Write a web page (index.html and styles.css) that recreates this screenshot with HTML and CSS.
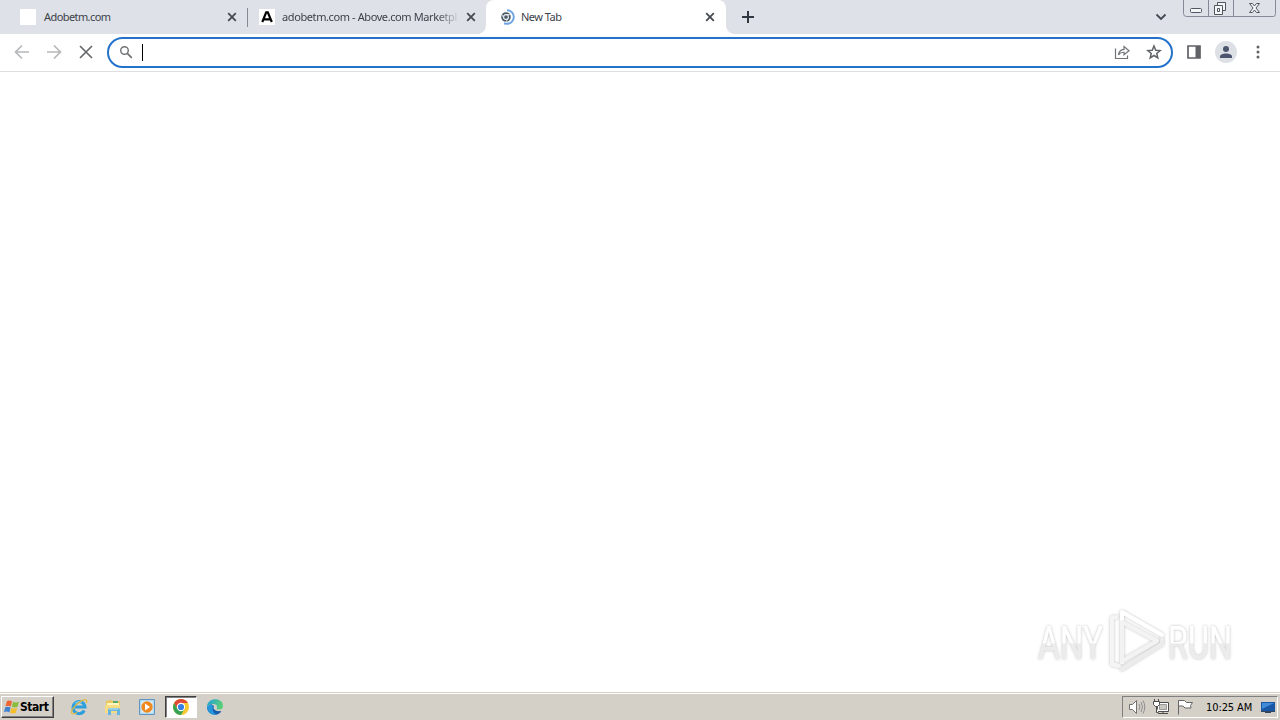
FILE: index.html
```html
<!DOCTYPE html>
<html lang="en">
<head>
<meta charset="utf-8">
<title>New Tab</title>
<link rel="stylesheet" href="styles.css">
</head>
<body>
<div class="desktop">
  <header class="tabstrip">
    <div class="tab first">
      <span class="favicon blank"></span>
      <span class="title t1">Adobetm.com</span>
      <svg class="close" viewBox="0 0 10 10"><path d="M1.2 1.2l7.6 7.6M8.800 1.200l-7.600 7.600"/></svg>
    </div>
    <div class="tab second">
      <span class="favicon"><svg width="16" height="16" viewBox="0 0 16 16"><path d="M3.300 13L7.200 3.300h1.600L12.800 13M5.300 10.300h6" fill="none" stroke="#000" stroke-width="2.200"/></svg></span>
      <span class="title fade t2">adobetm.com - Above.com Marketpl</span>
      <svg class="close" viewBox="0 0 10 10"><path d="M1.200 1.200l7.600 7.600M8.800 1.200l-7.600 7.600"/></svg>
    </div>
    <div class="tab active">
      <span class="spinner"><svg width="16" height="16" viewBox="0 0 16 16" fill="none"><circle cx="7" cy="8" r="4.800" fill="#4b5967"/><circle cx="7" cy="8" r="2.400" stroke="#e9eef2" stroke-width="1.100"/><path d="M7 5.600h5M4.900 9.200L2.800 5.500M9.200 9.200l-2.300 3.800" stroke="#e9eef2" stroke-width=".9"/><path d="M8 1.200A6.800 6.800 0 0 1 8 14.800L5 14.500" stroke="#6ba3e4" stroke-width="1.900"/></svg></span>
      <span class="title t3">New Tab</span>
      <svg class="close" viewBox="0 0 10 10"><path d="M1.200 1.200l7.600 7.600M8.800 1.200l-7.600 7.600"/></svg>
    </div>
    <svg class="plus" width="14" height="14" viewBox="0 0 14 14"><path d="M7 1v12M1 7h12" stroke="#303740" stroke-width="2"/></svg>
    <svg class="chevron" width="12" height="8" viewBox="0 0 12 8"><path d="M1.500 1.500L6 6l4.500-4.500" fill="none" stroke="#414950" stroke-width="1.800"/></svg>
    <svg class="winbuttons" width="94" height="18" viewBox="0 0 94 18" fill="none"><path d="M.5 0v13.500q0 3 3 3h87q2 0 2-3V0M25.500 0v16M50.500 0v16" stroke="#858b96"/><rect x="7.500" y="8.500" width="11" height="4" rx="1" fill="#f4f5f7" stroke="#515761"/><g fill="#f4f5f7" stroke="#515761"><path d="M34.500 2.500h8v8h-8z"/><path d="M31.500 5.500h8v9h-8z"/><path d="M34.500 8.500h2v3h-2z"/></g><path d="M66.500 3.500h3l2 2.500 2-2.500h3l-3.500 4.500 3.500 4.500h-3l-2-2.500-2 2.500h-3L70 8z" fill="#f4f5f7" stroke="#515761"/></svg>
  </header>

  <nav class="toolbar">
    <svg width="16" height="16" viewBox="0 0 16 16"><path d="M15 8H2M8 1.500L1.500 8 8 14.500" stroke="#b7b8ba"/></svg>
    <svg width="16" height="16" viewBox="0 0 16 16"><path d="M1 8h13M8 1.500L14.500 8 8 14.500" stroke="#b7b8ba"/></svg>
    <svg width="16" height="16" viewBox="0 0 16 16"><path d="M2 2l12 12M14 2L2 14" stroke="#66696d"/></svg>
    <div class="omnibox">
      <svg width="14" height="14" viewBox="0 0 14 14"><circle cx="5.500" cy="5.500" r="3.800" stroke="#707276" stroke-width="1.400"/><path d="M8.300 8.300l4.500 4.500" stroke="#707276"/></svg>
      <span class="caret"></span>
      <svg class="share" width="16" height="16" viewBox="0 0 16 16"><path d="M1.500 4.500v10h12v-3" stroke="#707276" stroke-width="1.200"/><path d="M4.500 11Q5 5.500 10 5.300V2.500l5 4.300-5 4V8.300Q6.500 8 4.500 11z" stroke="#707276" stroke-width="1.200"/></svg>
      <svg class="star" width="16" height="16" viewBox="0 0 16 16"><path d="M8 2l1.750 4.250 4.450.35-3.450 2.900 1.050 4.400L8 11.500l-3.800 2.400 1.050-4.400L1.800 6.600l4.450-.35z" stroke="#606368" stroke-width="1.500"/></svg>
    </div>
    <svg class="panel" width="14" height="14" viewBox="0 0 14 14"><path d="M1 1h12v12H1z" stroke="#606266"/><path d="M8.500 1H13v12H8.500z" fill="#606266"/></svg>
    <svg class="profile" width="22" height="22" viewBox="0 0 22 22"><circle cx="11" cy="11" r="11" fill="#dde1e6"/><circle cx="11" cy="8" r="3" fill="#4b556e"/><path d="M5 17v-1.500c0-4 12-4 12 0V17z" fill="#4b556e"/></svg>
    <svg class="menu" width="4" height="16" viewBox="0 0 4 16"><g fill="#606266"><circle cx="2" cy="3" r="1.500"/><circle cx="2" cy="8" r="1.500"/><circle cx="2" cy="13" r="1.500"/></g></svg>
  </nav>

  <main class="page">
    <svg class="watermark" width="210" height="76" viewBox="0 0 210 76" fill="none">
      <defs>
        <linearGradient id="lt" x1="0" y1="0" x2="0" y2="76" gradientUnits="userSpaceOnUse"><stop offset=".5" stop-color="#fff"/><stop offset=".51" stop-color="#ececec"/></linearGradient>
        <filter id="sh" x="-10%" y="-20%" width="120%" height="140%"><feDropShadow dx="0" dy="0" stdDeviation="1.800" flood-color="#777" flood-opacity=".48"/></filter>
      </defs>
      <g filter="url(#sh)">
        <g class="brand" fill="url(#lt)">
          <text x="8" y="54" textLength="65" lengthAdjust="spacingAndGlyphs">ANY</text>
          <text x="138" y="54" textLength="64" lengthAdjust="spacingAndGlyphs">RUN</text>
        </g>
        <g stroke-width="4" stroke-linejoin="round" stroke-linecap="round">
          <path d="M86 12l-4 1v46l7 2" stroke="#f5f5f5"/>
          <path d="M92 57V7l40 23" stroke="#fff"/>
          <path d="M92 17l35 19-35 20z" stroke="#f3f3f3"/>
          <path d="M92 64l40-25v-5" stroke="#ececec"/>
        </g>
      </g>
    </svg>
  </main>

  <footer class="taskbar">
    <div class="start">
      <svg width="16" height="16" viewBox="0 0 16 16"><path d="M3 2q2.500-1.300 5 .3L6.800 7.400Q4.500 6 1.500 7.200z" fill="#ee6531"/><path d="M9 2.700q2.500 1.400 6 .1l-1.500 5q-3 1.200-5.800-.1z" fill="#8bbd3c"/><path d="M1.300 8.300q2.800-1.300 5.300.2L5.300 13.400Q3 12 0 13.100z" fill="#3f83cf"/><path d="M7.400 8.900q3 1.300 5.800.2l-1.500 5q-3 1-5.700-.3z" fill="#f4bd2b"/></svg><span>Start</span>
    </div>
    <div class="launch">
      <svg width="18" height="18" viewBox="0 0 18 18" fill="none"><path d="M14.300 12.500A6 6 0 1 1 15 9H5" stroke="#2d9fdd" stroke-width="3"/><path d="M5 5.500a6 6 0 0 1 7-1.300" stroke="#8bdcf8"/><path d="M2 15.500C-.5 12 11 .5 16 2q1.300.5.3 3M2 15.500q2 1 5-1" stroke="#e4b83c" stroke-width="1.300"/></svg>
    </div>
    <div class="launch">
      <svg width="18" height="18" viewBox="0 0 18 18"><path d="M2 3l5-1 1 1h8v12H2z" fill="#eac85e"/><path d="M3 5h12v3H3z" fill="#fff6bd"/><path d="M9 3h5v2H9z" fill="#57a96c"/><path d="M1 7h15v8H1z" fill="#f6dc83"/><path d="M4 17v-5q0-2 2-2h8q2 0 2 2v5h-3v-4H7v4z" fill="#67b5df"/><path d="M5 11h9" stroke="#c2e8f8"/></svg>
    </div>
    <div class="launch">
      <svg width="18" height="18" viewBox="0 0 18 18"><path d="M1.500 1.500h15v15h-15z" fill="#b7d9f0" stroke="#5d95c5"/><path d="M3.500 3.500h11v11h-11z" fill="#e4f0f8"/><circle cx="9" cy="9" r="5.700" fill="#f08a20"/><path d="M7 5.500l5 3.500-5 3.500z" fill="#fff"/></svg>
    </div>
    <div class="launch running">
      <svg width="18" height="18" viewBox="0 0 18 18"><circle cx="9" cy="9" r="8" fill="#f6c92f"/><path d="M2.100 5A8 8 0 0 1 15.900 5H9L5.500 11z" fill="#df4935"/><path d="M2.100 5A8 8 0 0 0 9 17l3.500-6H5.500z" fill="#36a354"/><circle cx="9" cy="9" r="4.200" fill="#fff"/><circle cx="9" cy="9" r="3.100" fill="#377de2"/></svg>
    </div>
    <div class="launch">
      <svg width="18" height="18" viewBox="0 0 18 18"><defs><linearGradient id="edge" x1="0" y1="0" x2="1" y2=".3"><stop stop-color="#229ed9"/><stop offset="1" stop-color="#58cf78"/></linearGradient></defs><path d="M1 9A8 8 0 0 0 15.500 13.300L11 13Q6 11 8 8L5 6z" fill="#175eae"/><path d="M1 9C1-1 17-1 17 8q0 4-5 3.500-2-.4-1-2Q11.500 6 7 6 3 6 1 9z" fill="url(#edge)"/><path d="M1 9q3-3.500 6-1.500-2 6 3.500 9.400Q2 17.500 1 9z" fill="#2497dc"/></svg>
    </div>
    <div class="tray">
      <svg width="18" height="18" viewBox="0 0 18 18" fill="none"><path d="M1.500 6.500h3l4-4v13l-4-4h-3z" fill="#fff" stroke="#707070"/><path d="M11 6q2 3 0 6M13 4q3 5 0 10M15 2.500q3.500 6.500 0 13" stroke="#8e8e8e"/></svg>
      <svg width="18" height="18" viewBox="0 0 18 18" fill="#fff" stroke="#4d4d4d"><path d="M5.500 4.500h11v9h-11z"/><path d="M7.500 6.500h7v5h-7z" fill="#c9c7c2" stroke="#999"/><path d="M6 15.500h10M11 13.500v2M2.500 1v3M6.500 1v3M1.500 3.500h6v3l-2 2h-2l-2-2zM4.500 8.500v6h2"/></svg>
      <svg width="18" height="18" viewBox="0 0 18 18" fill="#fff" stroke="#666"><path d="M2.500 2.500v14M2.500 2.500h6l2 2h6l-2 3 .5 2.500h-6l-2-2h-4.500z"/></svg>
      <span class="clock">10:25 AM</span>
      <svg class="display" width="16" height="16" viewBox="0 0 16 16"><path d="M1 3h14v9H1z" fill="#1857a5"/><path d="M2 4h12L2 10z" fill="#438bd7"/><path d="M1 12h14v1H1zM5 13h6v1H5z" fill="#34465e"/></svg>
    </div>
  </footer>
</div>
</body>
</html>
```
FILE: styles.css
```css
* { box-sizing: border-box; }
body { margin: 0; font-family: "DejaVu Sans Condensed", "DejaVu Sans", sans-serif; }
svg { display: block; flex: none; }
.desktop { width: 1280px; height: 720px; display: flex; flex-direction: column; overflow: hidden; background: #fff; }
.tabstrip { height: 34px; flex: none; display: flex; background: #dee1e8; }
.tab { height: 34px; display: flex; align-items: center; flex: none; color: #3d4249; }
.first { width: 247px; padding-left: 20px; }
.second { width: 239px; padding-left: 11px; border-left: 1px solid #858992; height: 19px; margin-top: 8px; padding-bottom: 1px; }
.active { width: 240px; padding-left: 13px; background: #fff; border-radius: 8px 8px 0 0; position: relative; }
.active::before, .active::after { content: ""; position: absolute; bottom: 0; width: 8px; height: 8px; }
.active::before { left: -8px; background: radial-gradient(circle at 0 0, #dee1e8 7.500px, #fff 8px); }
.active::after { right: -8px; background: radial-gradient(circle at 100% 0, #dee1e8 7.500px, #fff 8px); }
.favicon { width: 16px; height: 16px; background: #fff; flex: none; }
.spinner { width: 16px; flex: none; }
.title { font-family: "Noto Sans", sans-serif; font-size: 11px; line-height: 16px; white-space: nowrap; flex: none; }
.t1 { width: 183px; margin-left: 8px; letter-spacing: -.58px; }
.t2 { width: 176px; margin-left: 7px; letter-spacing: -.4px; }
.t3 { width: 184px; margin-left: 6px; letter-spacing: -.5px; }
.fade { -webkit-mask-image: linear-gradient(90deg, #000 155px, transparent 178px); mask-image: linear-gradient(90deg, #000 155px, transparent 178px); }
.close { width: 10px; height: 10px; fill: none; stroke: #454a51; stroke-width: 1.800; }
.second .close { margin-left: 8px; }
.plus { margin: 10px 0 0 15px; }
.chevron { margin: 13px 0 0 auto; }
.winbuttons { margin: 0 3px 0 16px; }
.toolbar { height: 38px; flex: none; display: flex; align-items: center; gap: 16px; padding: 0 20px 1px 14px; background: #fff; border-bottom: 1px solid #dedee0; }
.toolbar svg { fill: none; stroke-width: 1.700; }
.omnibox { width: 1066px; height: 31px; margin-left: -3px; border: 2px solid #2473ca; border-radius: 16px; display: flex; align-items: center; padding: 0 9px 0 10px; }
.caret { width: 1px; height: 17px; background: #000; margin-left: 9px; }
.share { margin-left: auto; margin-right: 16px; }
.panel { margin-left: -2px; }
.profile { margin-left: -2px; }
.menu { margin-left: 3px; }
.page { flex: 1; display: flex; justify-content: flex-end; align-items: flex-end; padding: 0 40px 11px 0; }
.brand { font-family: "Roboto", sans-serif; font-size: 47px; font-weight: 400; }
.taskbar { height: 28px; flex: none; display: flex; align-items: flex-start; padding: 3px 2px 0 1px; background: #d4d0c8; border-top: 1px solid #d4d0c8; box-shadow: inset 0 1px #fff; }
.start { width: 53px; height: 22px; display: flex; align-items: center; padding-left: 2px; border: 1px solid; border-color: #fff #404040 #404040 #fff; box-shadow: inset -1px -1px #808080; font-weight: bold; font-size: 12px; letter-spacing: -.45px; margin-right: 9px; color: #000; }
.launch { width: 32px; height: 22px; margin-right: 2px; display: flex; align-items: center; justify-content: center; }
.running { background: #fff; border: 1px solid; border-color: #404040 #fff #fff #404040; box-shadow: inset 1px 1px #808080; }
.tray { width: 156px; height: 22px; margin-left: auto; display: flex; align-items: center; gap: 6px; padding-left: 5px; border: 1px solid; border-color: #808080 #fff #fff #808080; }
.clock { width: 47px; margin-left: 6px; font-family: "DejaVu Sans Condensed", sans-serif; font-size: 11px; letter-spacing: -.1px; white-space: nowrap; color: #000; }
.display { margin-left: 1px; }
```
